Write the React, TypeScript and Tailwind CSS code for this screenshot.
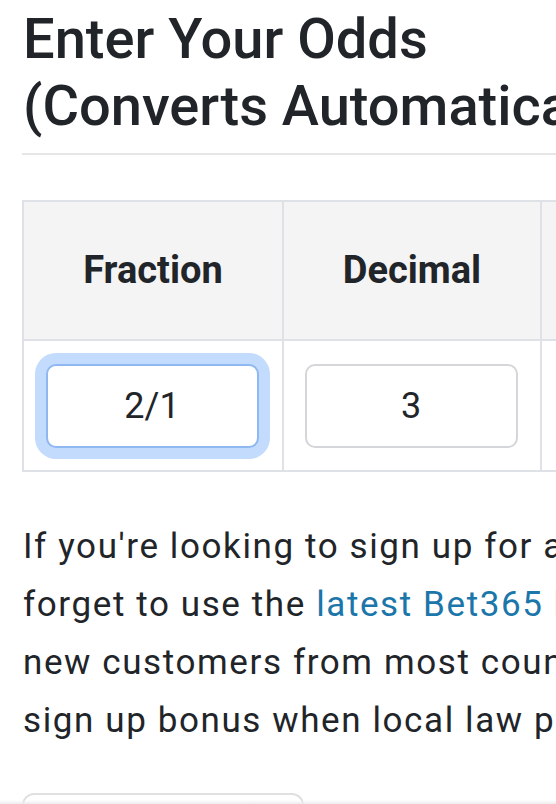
import React from "react";

export default function App() {
  return (
    <div className="relative w-[556px] h-[804px] overflow-hidden bg-white text-[#212529] [font-family:Roboto,'Noto_Sans',sans-serif]">
      <div className="w-[900px] pl-[22px] pt-[6px]">
        <h2 className="text-[56px] leading-[1.2] font-medium whitespace-nowrap pl-[1px]">
          Enter Your Odds
          <br />
          (Converts Automatically)
        </h2>
        <div className="mt-[13px] h-[2px] bg-[#e6e6e6]" />

        <div className="mt-[45px] flex flex-col border-l-2 border-t-2 border-[#dee2e6]">
          <div className="flex bg-[#f4f4f4]">
            <div className="w-[260px] h-[139px] flex items-center justify-center border-r-2 border-b-2 border-[#dee2e6] text-[38px] font-bold">
              Fraction
            </div>
            <div className="w-[258px] h-[139px] flex items-center justify-center border-r-2 border-b-2 border-[#dee2e6] text-[38px] font-bold">
              Decimal
            </div>
            <div className="w-[258px] h-[139px] flex items-center justify-center border-r-2 border-b-2 border-[#dee2e6] text-[38px] font-bold">
              American
            </div>
          </div>
          <div className="flex bg-white">
            <div className="w-[260px] h-[131px] flex items-center justify-center border-r-2 border-b-2 border-[#dee2e6]">
              <div className="w-[213px] h-[84px] -ml-[2px] rounded-[10px] border-2 border-[#8fb8f3] bg-white shadow-[0_0_0_11px_#c3dbfd] flex items-center justify-center text-[36px]">
                2/1
              </div>
            </div>
            <div className="w-[258px] h-[131px] flex items-center justify-center border-r-2 border-b-2 border-[#dee2e6]">
              <div className="w-[213px] h-[84px] -ml-[2px] rounded-[10px] border-2 border-[#d4d6d9] bg-white flex items-center justify-center text-[36px]">
                3
              </div>
            </div>
            <div className="w-[258px] h-[131px] flex items-center justify-center border-r-2 border-b-2 border-[#dee2e6]">
              <div className="w-[213px] h-[84px] rounded-[10px] border-2 border-[#d4d6d9] bg-white flex items-center justify-center text-[36px]">
                +200
              </div>
            </div>
          </div>
        </div>

        <p className="mt-[46px] text-[35px] leading-[57.8px] tracking-[1.6px] whitespace-nowrap pl-[1px]">
          If you're looking to sign up for a new account, don't
          <br />
          forget to use the{" "}
          <a className="text-[#1b76aa]" href="#">
            latest Bet365 bonus code
          </a>{" "}
          as
          <br />
          new customers from most countries can claim a
          <br />
          sign up bonus when local law permits.
        </p>

        <div className="mt-[43px] w-[282px] h-[60px] rounded-[12px] border-2 border-[#e0e0e0]" />
      </div>
      <div className="absolute left-0 right-0 bottom-0 h-[4px] bg-gradient-to-b from-transparent to-[#ececec]" />
    </div>
  );
}
